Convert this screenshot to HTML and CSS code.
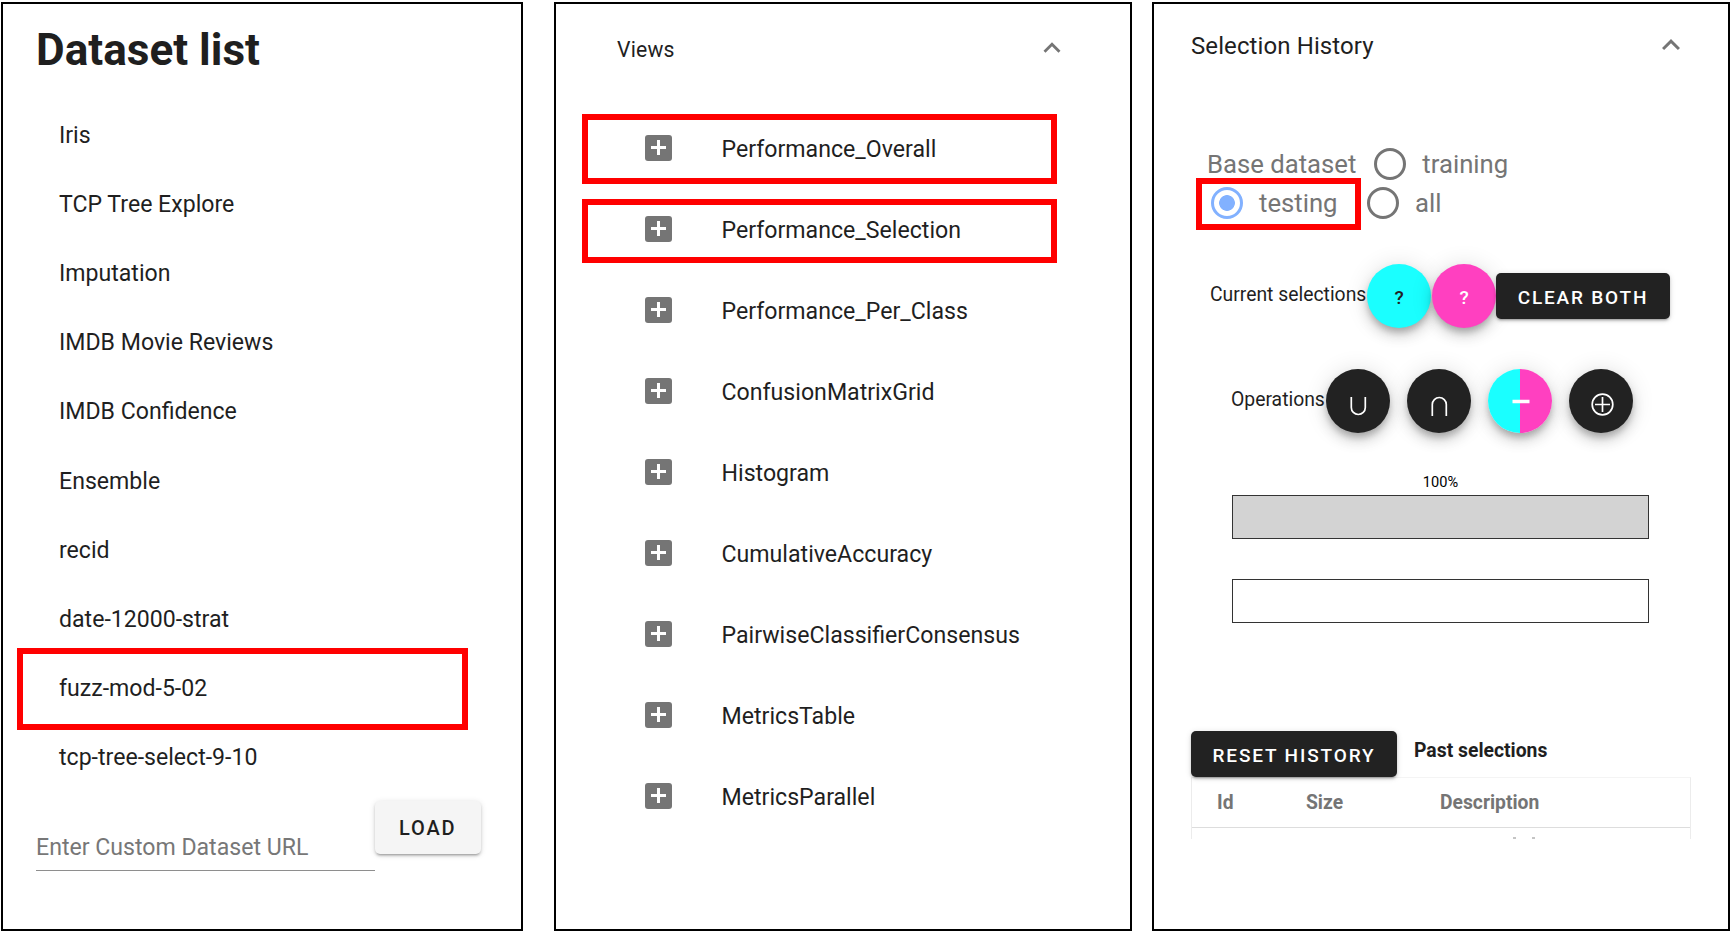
FILE: index.html
```html
<!DOCTYPE html>
<html lang="en">
<head>
<meta charset="utf-8">
<title>Dataset tools</title>
<link rel="stylesheet" href="styles.css">
</head>
<body>
<main class="board">
  <section class="panel datasets">
    <h1 class="title">Dataset list</h1>
    <ul class="dataset-list">
      <li>Iris</li>
      <li>TCP Tree Explore</li>
      <li>Imputation</li>
      <li>IMDB Movie Reviews</li>
      <li>IMDB Confidence</li>
      <li>Ensemble</li>
      <li>recid</li>
      <li>date-12000-strat</li>
      <li>fuzz-mod-5-02<span class="mark mark-dataset"></span></li>
      <li>tcp-tree-select-9-10</li>
    </ul>
    <div class="loader">
      <div class="url-field"><span class="placeholder">Enter Custom Dataset URL</span></div>
      <button class="btn btn-light">LOAD</button>
    </div>
  </section>

  <section class="panel views">
    <header class="views-head">
      <span class="views-title">Views</span>
      <svg class="chevron" viewBox="0 0 24 24"><path d="M12 8l-6 6 1.41 1.41L12 10.83l4.59 4.58L18 14z"/></svg>
    </header>
    <ul class="view-list">
      <li><i class="plus"></i><span class="label">Performance_Overall</span><span class="mark mark-overall"></span></li>
      <li><i class="plus"></i><span class="label">Performance_Selection</span><span class="mark mark-selection"></span></li>
      <li><i class="plus"></i><span class="label">Performance_Per_Class</span></li>
      <li><i class="plus"></i><span class="label">ConfusionMatrixGrid</span></li>
      <li><i class="plus"></i><span class="label">Histogram</span></li>
      <li><i class="plus"></i><span class="label">CumulativeAccuracy</span></li>
      <li><i class="plus"></i><span class="label">PairwiseClassifierConsensus</span></li>
      <li><i class="plus"></i><span class="label">MetricsTable</span></li>
      <li><i class="plus"></i><span class="label">MetricsParallel</span></li>
    </ul>
  </section>

  <section class="panel history">
    <header class="history-head">
      <span class="history-title">Selection History</span>
      <svg class="chevron chevron-lg" viewBox="0 0 24 24"><path d="M12 8l-6 6 1.41 1.41L12 10.83l4.59 4.58L18 14z"/></svg>
    </header>
    <div class="base base-first">
      <span>Base dataset</span><i class="radio"></i><span>training</span>
    </div>
    <div class="base base-second">
      <i class="radio radio-on"></i><span class="testing">testing</span><i class="radio"></i><span>all</span>
      <span class="mark mark-testing"></span>
    </div>
    <div class="current">
      <span class="caption">Current selections</span>
      <button class="fab cyan">?</button>
      <button class="fab pink">?</button>
      <button class="btn btn-dark clear">CLEAR BOTH</button>
    </div>
    <div class="operations">
      <span class="caption">Operations</span>
      <button class="fab dark"><svg viewBox="0 0 64 64"><path d="M25.3 28v10.5a7 7 0 0 0 14 0V28"/></svg></button>
      <button class="fab dark"><svg viewBox="0 0 64 64"><path d="M25.3 47V35.500a7 7 0 0 1 14 0V47"/></svg></button>
      <button class="fab split"><svg viewBox="0 0 64 64"><path class="minus" d="M24.500 32.500h17"/></svg></button>
      <button class="fab dark"><svg viewBox="0 0 64 64"><circle cx="33.500" cy="35.500" r="10.300"/><path d="M33.500 28v15M26 35.500h15"/></svg></button>
    </div>
    <div class="bars">
      <span class="percent">100%</span>
      <div class="bar filled"></div>
      <div class="bar"></div>
    </div>
    <div class="past">
      <button class="btn btn-dark reset">RESET HISTORY</button>
      <span class="past-title">Past selections</span>
    </div>
    <div class="table">
      <div class="thead"><span>Id</span><span>Size</span><span>Description</span></div>
      <svg class="cut-row" viewBox="0 0 497 11"><path d="M321 10h3M340 10h3"/></svg>
    </div>
  </section>
</main>
</body>
</html>
```

FILE: styles.css
```css
* { box-sizing: border-box; }
body {
  margin: 0;
  background: #fff;
  font-family: Roboto, "Liberation Sans", sans-serif;
  color: #1f1f1f;
}
ul { list-style: none; margin: 0; padding: 0; }
button { border: 0; padding: 0; font-family: inherit; }

.board {
  display: flex;
  width: 1731px;
  height: 932px;
  padding: 2px 0 1px 1px;
}
.panel {
  height: 929px;
  border: 2px solid #000;
  flex: none;
}
.mark {
  position: absolute;
  border: 6px solid #f00;
}

/* Dataset list */
.datasets { width: 522px; padding-left: 33px; }
.title {
  margin: 0;
  padding-top: 20px;
  height: 96.6px;
  font-size: 44.1px;
  line-height: 52px;
  font-weight: 700;
}
.dataset-list li {
  position: relative;
  height: 69.2px;
  padding-left: 23px;
  font-size: 23.1px;
  line-height: 69.2px;
}
.mark-dataset { left: -19px; top: -6.6px; width: 451px; height: 82px; }
.loader { display: flex; align-items: flex-start; padding-top: 8.4px; }
.url-field {
  width: 339px;
  height: 70px;
  padding-top: 32px;
  border-bottom: 1.5px solid #8e8e8e;
}
.placeholder { display: block; color: #777; font-size: 23.1px; line-height: 30px; white-space: nowrap; }
.btn {
  border-radius: 5px;
  font-weight: 500;
  white-space: nowrap;
  box-shadow: 0 3px 2px -2px rgba(0,0,0,.2), 0 2px 3px rgba(0,0,0,.16), 0 1px 6px rgba(0,0,0,.12);
}
.btn-light {
  width: 105.5px;
  height: 53px;
  padding-top: 2px;
  background: #f5f5f5;
  color: #1f1f1f;
  font-size: 20px;
  letter-spacing: 1.8px;
}

/* Views */
.views { width: 578px; margin-left: 31px; padding-left: 26px; }
.views-head {
  display: flex;
  justify-content: space-between;
  align-items: center;
  height: 88px;
  padding: 2px 61px 2px 35px;
}
.views-title { margin-top: 3px; font-size: 21.2px; letter-spacing: .2px; }
.chevron { width: 34px; height: 34px; fill: #757575; }
.view-list { padding-top: 17px; }
.view-list li {
  position: relative;
  display: flex;
  align-items: center;
  height: 81px;
  padding-left: 62.5px;
  font-size: 23.15px;
}
.plus {
  width: 27px;
  height: 26px;
  margin-top: -4px;
  margin-right: 50px;
  border-radius: 3px;
  background:
    linear-gradient(#fff, #fff) center / 15px 3px no-repeat,
    linear-gradient(#fff, #fff) center / 3px 15px no-repeat,
    #757575;
}
.mark-overall { left: 0; top: 5px; width: 475px; height: 70px; }
.mark-selection { left: 0; top: 9px; width: 475px; height: 64px; }

/* Selection history */
.history { width: 578px; margin-left: 20px; padding-left: 37px; }
.history-head {
  display: flex;
  justify-content: space-between;
  align-items: center;
  height: 84px;
  padding-right: 39.5px;
}
.history-title { font-size: 24px; letter-spacing: .1px; }
.chevron-lg { width: 36px; height: 36px; margin-top: -2px; }
.base { position: relative; display: flex; align-items: center; height: 39px; color: #757575; font-size: 25.7px; }
.base-first { margin-top: 56px; padding-left: 16px; }
.base-first span { margin-top: 1px; }
.base-second { padding-left: 19.5px; }
.radio { width: 32px; height: 32px; border: 3px solid #757575; border-radius: 50%; margin: 0 16.5px 0 17.5px; }
.base-second .radio { margin-left: 29px; }
.base-second .radio-on {
  margin-left: 0;
  border-color: #82b1ff;
  background: radial-gradient(circle, #82b1ff 7.5px, transparent 8.2px);
}
.mark-testing { left: 5px; top: -5px; width: 165px; height: 52px; }
.current, .operations { display: flex; align-items: center; height: 64px; }
.current { margin-top: 42px; padding-left: 19px; }
.operations { margin-top: 41px; padding-left: 40px; gap: 17px; }
.caption { font-size: 19.35px; margin-top: -3px; white-space: nowrap; }
.current .caption { width: 157px; }
.operations .caption { width: 95px; margin-right: -17px; }
.fab {
  width: 64px;
  height: 64px;
  flex: none;
  border-radius: 50%;
  font-size: 19px;
  font-weight: 500;
  box-shadow: 0 5px 6px -1px rgba(0,0,0,.2), 0 8px 13px rgba(0,0,0,.14), 0 1px 23px rgba(0,0,0,.12);
}
.current .fab { padding-top: 2px; }
.fab svg { display: block; width: 64px; height: 64px; fill: none; stroke: #fff; stroke-width: 1.7; }
.fab .minus { stroke-width: 3.5; }
.cyan { background: #1affff; color: #222; margin-right: 1px; }
.pink { background: #ff40c0; color: #fff; }
.dark { background: #222; }
.split { background: linear-gradient(90deg, #1affff 50%, #ff40c0 50%); }
.btn-dark { background: #222; color: #fff; font-size: 19px; height: 46px; padding-top: 2px; }
.clear { width: 174px; letter-spacing: 1.8px; z-index: 1; }
.bars { display: flex; flex-direction: column; width: 417px; margin: 38px 0 0 41px; }
.percent { height: 24px; font-size: 14.6px; line-height: 23px; text-align: center; color: #000; }
.bar { height: 44px; border: 1.5px solid #333; margin-bottom: 40px; }
.filled { background: #d3d3d3; }
.past { display: flex; margin-top: 68px; }
.reset { width: 206px; letter-spacing: 1.85px; }
.past-title { margin-left: 17px; font-size: 19.35px; font-weight: 700; line-height: 39px; }
.table {
  width: 500px;
  height: 62px;
  border: 1px solid #ececec;
  border-top-color: #f4f4f4;
  border-bottom: 0;
}
.thead {
  display: grid;
  grid-template-columns: 89px 134px 1fr;
  height: 50px;
  padding-left: 25px;
  border-bottom: 1px solid #ddd;
  color: #757575;
  font-size: 19.3px;
  font-weight: 700;
  line-height: 50px;
}
.cut-row { display: block; width: 497px; height: 11px; stroke: #8a8a8a; stroke-width: 1; }
```
